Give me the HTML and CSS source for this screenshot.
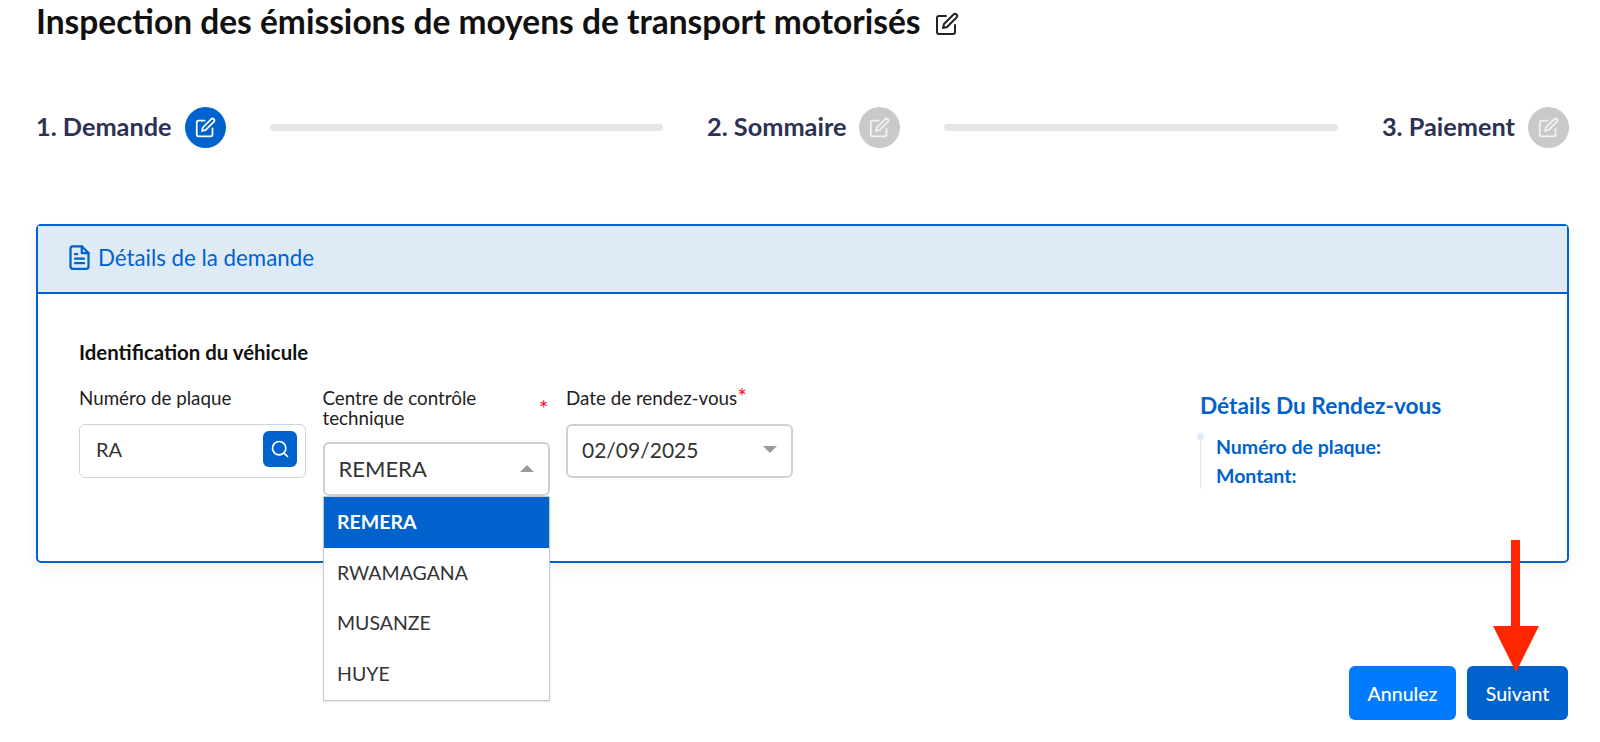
FILE: index.html
```html
<!DOCTYPE html>
<html lang="fr">
  <head>
    <meta charset="utf-8">
    <title>Inspection des émissions</title>
    <link rel="stylesheet" href="styles.css">
  </head>
  <body>
    <svg class="sprite" width="0" height="0">
      <symbol id="icon-edit" viewBox="0 0 24 24">
        <path d="M11 4H4a2 2 0 0 0-2 2v14a2 2 0 0 0 2 2h14a2 2 0 0 0 2-2v-7"/>
        <path d="M18.5 2.5a2.121 2.121 0 0 1 3 3L12 15l-4 1 1-4 9.5-9.5z"/>
      </symbol>
    </svg>

    <div class="page">
      <h1 class="title">
        Inspection des émissions de moyens de transport motorisés
        <svg class="title-icon"><use href="#icon-edit"/></svg>
      </h1>

      <div class="stepper">
        <div class="step">
          <span class="step-label">1. Demande</span>
          <span class="step-circle active"><svg><use href="#icon-edit"/></svg></span>
        </div>
        <div class="step-track"></div>
        <div class="step">
          <span class="step-label">2. Sommaire</span>
          <span class="step-circle"><svg><use href="#icon-edit"/></svg></span>
        </div>
        <div class="step-track"></div>
        <div class="step">
          <span class="step-label">3. Paiement</span>
          <span class="step-circle"><svg><use href="#icon-edit"/></svg></span>
        </div>
      </div>

      <div class="card">
        <div class="card-header">
          <svg class="card-icon" viewBox="0 0 24 24">
            <path d="M14 2H6a2 2 0 0 0-2 2v16a2 2 0 0 0 2 2h12a2 2 0 0 0 2-2V8z"/>
            <path d="M14 2v6h6"/>
            <path d="M8 13h8"/>
            <path d="M8 17h8"/>
            <path d="M8 9h2"/>
          </svg>
          Détails de la demande
        </div>
        <div class="card-body">
          <div class="form-side">
            <h2 class="section-title">Identification du véhicule</h2>
            <div class="fields">
              <div class="field">
                <label class="field-label">Numéro de plaque</label>
                <div class="input-box plate">
                  <span>RA</span>
                  <button class="search-btn">
                    <svg viewBox="0 0 24 24">
                      <circle cx="11" cy="11" r="8"/>
                      <path d="M21 21l-4.35-4.35"/>
                    </svg>
                  </button>
                </div>
              </div>

              <div class="field">
                <label class="field-label with-star">
                  <span>Centre de contrôle technique</span>
                  <span class="star side">*</span>
                </label>
                <div class="select-wrap">
                  <div class="input-box select">
                    <span>REMERA</span>
                    <span class="caret up"></span>
                  </div>
                  <ul class="dropdown">
                    <li class="selected">REMERA</li>
                    <li>RWAMAGANA</li>
                    <li>MUSANZE</li>
                    <li>HUYE</li>
                  </ul>
                </div>
              </div>

              <div class="field">
                <label class="field-label">Date de rendez-vous<span class="star">*</span></label>
                <div class="input-box select date">
                  <span>02/09/2025</span>
                  <span class="caret down"></span>
                </div>
              </div>
            </div>
          </div>

          <div class="summary">
            <h3 class="summary-title">Détails Du Rendez-vous</h3>
            <div class="summary-list">
              <p>Numéro de plaque:</p>
              <p>Montant:</p>
            </div>
          </div>
        </div>
      </div>

      <div class="actions">
        <button class="btn btn-light">Annulez</button>
        <button class="btn btn-dark">Suivant</button>
      </div>
    </div>

    <!-- red arrow added over the screenshot -->
    <svg class="arrow" width="46" height="134" viewBox="0 0 46 134">
      <rect x="18" y="0" width="9" height="90" fill="#ff2600"/>
      <polygon points="0,86 46,86 23,132" fill="#ff2600"/>
    </svg>
  </body>
</html>
```

FILE: styles.css
```css
* {
  box-sizing: border-box;
}

body {
  margin: 0;
  background: #fff;
  font-family: "Lato", "Open Sans", sans-serif;
  color: #222;
  height: 742px;
  overflow: hidden;
  position: relative;
}

.sprite {
  position: absolute;
}

svg {
  fill: none;
  stroke: currentColor;
  stroke-width: 2;
  stroke-linecap: round;
  stroke-linejoin: round;
}

.page {
  padding: 0 31px 0 36px;
}

.title {
  margin: 0;
  padding-top: 1px;
  height: 61px;
  display: flex;
  align-items: flex-start;
  gap: 14px;
  font-size: 33.5px;
  line-height: 40px;
  font-weight: 700;
  color: #111;
}

.title-icon {
  width: 24px;
  height: 24px;
  margin-top: 11px;
  color: #222;
}

.stepper {
  display: flex;
  align-items: center;
  margin-top: 46px;
  height: 41px;
}

.step {
  display: flex;
  align-items: center;
  gap: 13px;
}

.step-label {
  font-size: 25.3px;
  font-weight: 700;
  color: #2d3154;
  margin-bottom: 4px;
}

.step-circle {
  width: 41px;
  height: 41px;
  border-radius: 50%;
  background: #c9c9c9;
  color: #f3f3f3;
  display: flex;
  align-items: center;
  justify-content: center;
}

.step-circle.active {
  background: #0062cc;
  color: #fff;
}

.step-circle svg {
  width: 21px;
  height: 21px;
}

.step-track {
  flex: 1;
  height: 7px;
  margin: 0 44px;
  border-radius: 4px;
  background: #e6e6e6;
}

.card {
  margin-top: 76px;
  height: 339px;
  border: 2px solid #0062cc;
  border-radius: 5px;
  box-shadow: 0 6px 14px rgba(0, 0, 0, 0.05);
}

.card-header {
  height: 68px;
  display: flex;
  align-items: center;
  gap: 5px;
  padding: 0 0 4px 28px;
  background: #deebf7;
  border-bottom: 2px solid #0062cc;
  color: #0062cc;
  font-size: 22.3px;
}

.card-icon {
  width: 27px;
  height: 27px;
}

.card-body {
  display: flex;
  justify-content: space-between;
  padding: 46px 0 0 41px;
}

.section-title {
  margin: 0 0 24px;
  font-size: 20.4px;
  line-height: 24px;
  font-weight: 700;
  color: #111;
}

.fields {
  display: flex;
  gap: 16.5px;
  align-items: flex-start;
}

.field {
  width: 227px;
}

.field-label {
  display: block;
  font-size: 18.8px;
  line-height: 20px;
  color: #222;
  margin-bottom: 16px;
}

.with-star {
  display: flex;
  justify-content: space-between;
  align-items: center;
  margin-bottom: 14px;
}

.with-star span:first-child {
  width: 180px;
}

.star {
  color: #f5143c;
  font-size: 23px;
  line-height: 0;
}

.star.side {
  margin-right: 1px;
}

.input-box {
  height: 54px;
  border: 1px solid #ced4da;
  border-radius: 6px;
  display: flex;
  align-items: center;
  justify-content: space-between;
  padding: 0 8px 4px 16px;
  background: #fff;
  font-size: 20px;
  color: #333;
}

.select {
  border: 2px solid #d0d0d0;
  padding: 0 14px 2px;
  font-size: 22px;
}

.date {
  padding-bottom: 4px;
  font-size: 21px;
}

.select-wrap {
  position: relative;
}

.caret {
  width: 0;
  height: 0;
  border-left: 7px solid transparent;
  border-right: 7px solid transparent;
}

.caret.up {
  border-bottom: 7px solid #999;
}

.caret.down {
  border-top: 7px solid #999;
}

.search-btn {
  width: 34px;
  height: 36px;
  padding: 0;
  border: 0;
  border-radius: 6px;
  background: #0062cc;
  color: #fff;
  display: flex;
  align-items: center;
  justify-content: center;
}

.search-btn svg {
  width: 20px;
  height: 20px;
}

.dropdown {
  position: absolute;
  top: 54px;
  left: 0;
  width: 100%;
  margin: 0;
  padding: 0 0 1px;
  list-style: none;
  background: #fff;
  border: 1px solid #c8c8c8;
  box-shadow: 0 1px 2px rgba(0, 0, 0, 0.1);
  height: 205px;
}

.dropdown li {
  height: 50.5px;
  line-height: 50px;
  padding-left: 13.5px;
  font-size: 19.5px;
  color: #333;
}

.dropdown li.selected {
  background: #0062cc;
  color: #fff;
  font-weight: 700;
}

.summary {
  width: 367px;
  padding-top: 53px;
}

.summary-title {
  margin: 0 0 14px;
  font-size: 22.7px;
  line-height: 26px;
  font-weight: 700;
  color: #0062cc;
}

.summary-list {
  position: relative;
  border-left: 1px solid #deebf7;
  padding-left: 15px;
  height: 56px;
}

.summary-list::before {
  content: "";
  position: absolute;
  top: 0;
  left: -4px;
  width: 7px;
  height: 7px;
  border-radius: 50%;
  background: #deebf7;
}

.summary-list p {
  margin: 0;
  font-size: 19.5px;
  line-height: 28.5px;
  font-weight: 700;
  color: #0062cc;
}

.actions {
  margin-top: 103px;
  display: flex;
  justify-content: flex-end;
  gap: 11px;
  padding-right: 1px;
}

.btn {
  height: 54px;
  border: 0;
  border-radius: 6px;
  color: #fff;
  font-family: inherit;
  font-size: 19.5px;
  font-weight: 500;
}

.btn-light {
  width: 107px;
  background: #007bff;
}

.btn-dark {
  width: 101px;
  background: #0062cc;
}

.arrow {
  position: absolute;
  top: 540px;
  left: 1493px;
  stroke: none;
}
```
